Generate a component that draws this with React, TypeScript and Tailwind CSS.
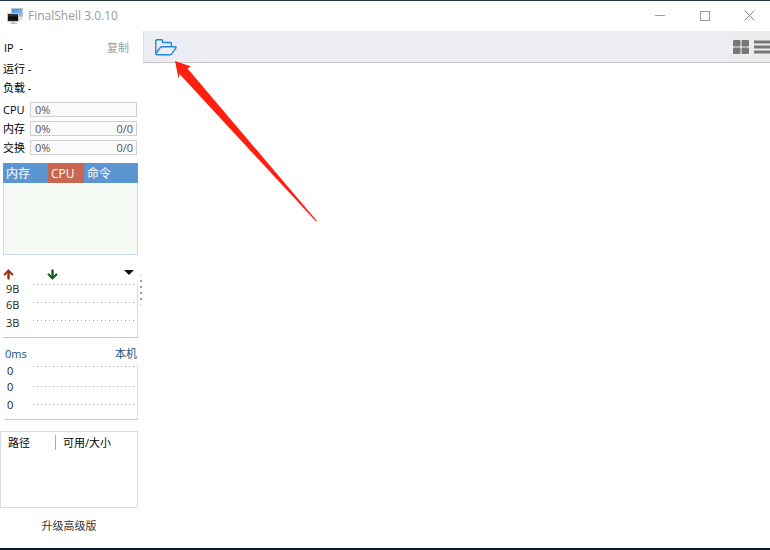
import { FaArrowDown, FaArrowUp } from "react-icons/fa";

const meters = [
  { name: "CPU", value: "0%", total: "" },
  { name: "内存", value: "0%", total: "0/0" },
  { name: "交换", value: "0%", total: "0/0" },
];

function AppIcon() {
  return (
    <svg width="17" height="17" viewBox="0 0 17 17" aria-hidden="true">
      <defs>
        <linearGradient id="back" x1="0" y1="0" x2="1" y2="1">
          <stop offset="0" stopColor="#3b8de0" />
          <stop offset="1" stopColor="#8cc8fa" />
        </linearGradient>
        <linearGradient id="front" x1="0" y1="0" x2="0" y2="1">
          <stop offset="0" stopColor="#4a4a4a" />
          <stop offset="0.5" stopColor="#0c0c0c" />
          <stop offset="1" stopColor="#222" />
        </linearGradient>
      </defs>
      <rect x="4.5" y="0.5" width="11" height="8" fill="url(#back)" stroke="#b9c3cc" />
      <path d="M12 10h3v1.500h-3z" fill="#c9c9c9" />
      <rect x="0.5" y="5.5" width="11" height="8" fill="url(#front)" stroke="#c4c8cc" />
      <path d="M5 14h3v1.500h-3z" fill="#aaa" />
      <path d="M3 15.500h7" stroke="#c4c4c4" />
    </svg>
  );
}

function TitleBar() {
  return (
    <header className="flex h-[31px] shrink-0 items-center border-t border-[#22333f] pl-[7px]">
      <AppIcon />
      <h1 className="ml-1 text-xs text-[#999]">FinalShell 3.0.10</h1>
      <div className="ml-auto flex h-full pb-px">
        <button aria-label="最小化" className="flex w-[42px] items-center justify-center">
          <span className="h-px w-[10px] bg-[#999]" />
        </button>
        <button aria-label="最大化" className="flex w-12 items-center justify-center">
          <span className="size-[10px] border border-[#999]" />
        </button>
        <button aria-label="关闭" className="flex w-[41px] items-center justify-center">
          <svg width="11" height="11" viewBox="0 0 11 11" stroke="#888">
            <path d="M0.500 0.500l10 10M10.500 0.500L0.500 10.500" />
          </svg>
        </button>
      </div>
    </header>
  );
}

function Chart({ labels, lines, className }: { labels: string[]; lines: number[]; className: string }) {
  return (
    <div className={`relative flex h-[55px] border-r border-b border-r-[#ccdce6] border-b-[#b4cdd6] ${className}`}>
      <ul className="flex w-[30px] flex-col gap-1 leading-3 text-[#222]">
        {labels.map((label, i) => (
          <li key={i} className="last:mt-[2px]">
            {label}
          </li>
        ))}
      </ul>
      <svg className="absolute top-0 right-0" width="104" height="54" stroke="#aaa" strokeDasharray="1 3">
        {lines.map((y) => (
          <path key={y} d={`M0 ${y}.5h102`} />
        ))}
      </svg>
    </div>
  );
}

function Sidebar() {
  return (
    <aside className="flex w-[138px] shrink-0 flex-col text-[11px] leading-[19px] text-black">
      <div className="mt-[7px] flex items-center justify-between pr-[9px] pl-1">
        <span className="whitespace-pre">IP  -</span>
        <button className="text-[#999]">复制</button>
      </div>
      <p className="mt-[2px] pl-[3px]">运行 -</p>
      <p className="pl-[3px]">负载 -</p>

      <div className="mt-[3px] pl-[3px]">
        {meters.map((m) => (
          <div key={m.name} className="flex h-[19px] items-center">
            <span className="w-[27px]">{m.name}</span>
            <div className="flex h-[15px] w-[107px] items-center justify-between border border-[#d0d0d0] bg-[#fafafa] pr-[3px] pl-1 text-[#555]">
              <span>{m.value}</span>
              <span>{m.total}</span>
            </div>
          </div>
        ))}
      </div>

      <div className="mt-[6px] ml-[3px] h-[92px] border border-t-0 border-[#ccdce8] bg-[#f5faf5]">
        <table className="-mx-px w-[135px] table-fixed text-left text-xs text-white">
          <thead>
            <tr className="h-5 bg-[#5b96d2]">
              <th className="w-[45px] p-0 pt-[2px] pl-[3px] font-normal">内存</th>
              <th className="w-9 bg-[#c96650] p-0 pt-[2px] pl-[3px] font-normal">CPU</th>
              <th className="p-0 pt-[2px] pl-[3px] font-normal">命令</th>
            </tr>
          </thead>
        </table>
      </div>

      <div className="mt-[13px] flex h-3 items-center pr-1 pl-[3px]">
        <FaArrowUp className="size-[11px] stroke-[#a03010] stroke-[30px] text-[#a03010]" />
        <FaArrowDown className="ml-[33px] size-[11px] stroke-[#145a1e] stroke-[30px] text-[#145a1e]" />
        <button aria-label="选择网卡" className="ml-auto flex pb-[3px]">
          <svg width="10" height="5" viewBox="0 0 10 5">
            <path d="M0 0h10L5 5z" fill="#111" />
          </svg>
        </button>
      </div>
      <Chart labels={["9B", "6B", "3B"]} lines={[1, 19, 37]} className="mt-[3px] ml-[3px] pl-[3px]" />

      <div className="mt-[6px] flex justify-between pr-px pl-[5px] text-[#15507f]">
        <span>0ms</span>
        <button>本机</button>
      </div>
      <Chart labels={["0", "0", "0"]} lines={[1, 21, 39]} className="mt-[2px] ml-[5px] pl-[2px]" />

      <div className="mt-[11px] h-[77px] border border-[#dadada] pt-px">
        <table className="w-full table-fixed text-left">
          <thead>
            <tr>
              <th className="w-[54px] p-0 pl-[7px] font-normal">路径</th>
              <th className="p-0 font-normal">
                <div className="flex items-center">
                  <span className="mr-[7px] h-[15px] w-px bg-[#aaa]" />
                  可用/大小
                </div>
              </th>
            </tr>
          </thead>
        </table>
      </div>
      <button className="mt-2 self-center text-[#333]">升级高级版</button>
    </aside>
  );
}

function Splitter() {
  return (
    <div className="flex w-[5px] shrink-0 flex-col items-center gap-1 pt-[243px]">
      <span className="size-[2px] bg-[#e4e4e4]" />
      <span className="size-[2px] bg-[#999]" />
      <span className="size-[2px] bg-[#999]" />
      <span className="size-[2px] bg-[#999]" />
      <span className="size-[2px] bg-[#999]" />
      <span className="size-[2px] bg-[#e4e4e4]" />
    </div>
  );
}

function Toolbar() {
  return (
    <div className="flex h-8 items-center border-b border-l border-b-[#c6c6c8] border-l-[#dcdde0] bg-[#ecedf2] pl-[11px]">
      <button aria-label="打开连接管理器" className="pt-[2px]">
        <svg width="22" height="17" viewBox="0 0 22 17" fill="none" stroke="#2386d8" strokeWidth="1.4" strokeLinejoin="round">
          <path d="M0.8 14.500V2Q0.800 0.800 2 0.800H6.500Q7.600 0.800 7.600 2V3.500H15Q16.400 3.500 16.400 5V7.500" />
          <path d="M2 15.700Q0.400 15.500 1.200 14L5 8.800Q5.800 7.800 7 7.800H20Q21.600 7.900 20.800 9.200L16.800 14.800Q16.200 15.700 15 15.700Z" />
        </svg>
      </button>
      <div className="ml-auto flex h-full items-center gap-1 bg-[#ececec] text-[#777]">
        <button aria-label="网格视图">
          <svg width="16" height="14" viewBox="0 0 16 14" fill="currentColor">
            <rect width="7.500" height="6.500" rx="1" />
            <rect x="8.500" width="7.500" height="6.500" rx="1" />
            <rect y="7.500" width="7.500" height="6.500" rx="1" />
            <rect x="8.500" y="7.500" width="7.500" height="6.500" rx="1" />
          </svg>
        </button>
        <button aria-label="列表视图">
          <svg width="17" height="14" viewBox="0 0 17 14" fill="currentColor">
            <path d="M1 0.500h16v3H1zM1 5.500h16v3H1zM1 10.500h16v3H1z" />
          </svg>
        </button>
      </div>
    </div>
  );
}

export default function App() {
  return (
    <div className="relative flex min-h-screen flex-col border-b-2 border-[#0a1c28] bg-white font-['Open_Sans','Noto_Sans_CJK_SC',sans-serif]">
      <TitleBar />
      <div className="flex flex-1">
        <Sidebar />
        <Splitter />
        <main className="min-w-0 flex-1">
          <Toolbar />
        </main>
      </div>
      <svg className="absolute top-[61px] left-[175px]" width="143" height="161" viewBox="0 0 143 161" aria-hidden="true">
        <path d="M0 0L16 5.500L12.500 7.500L142 160L141 160.500L4.500 13L3.500 17.500Z" fill="#ff2010" />
      </svg>
    </div>
  );
}
